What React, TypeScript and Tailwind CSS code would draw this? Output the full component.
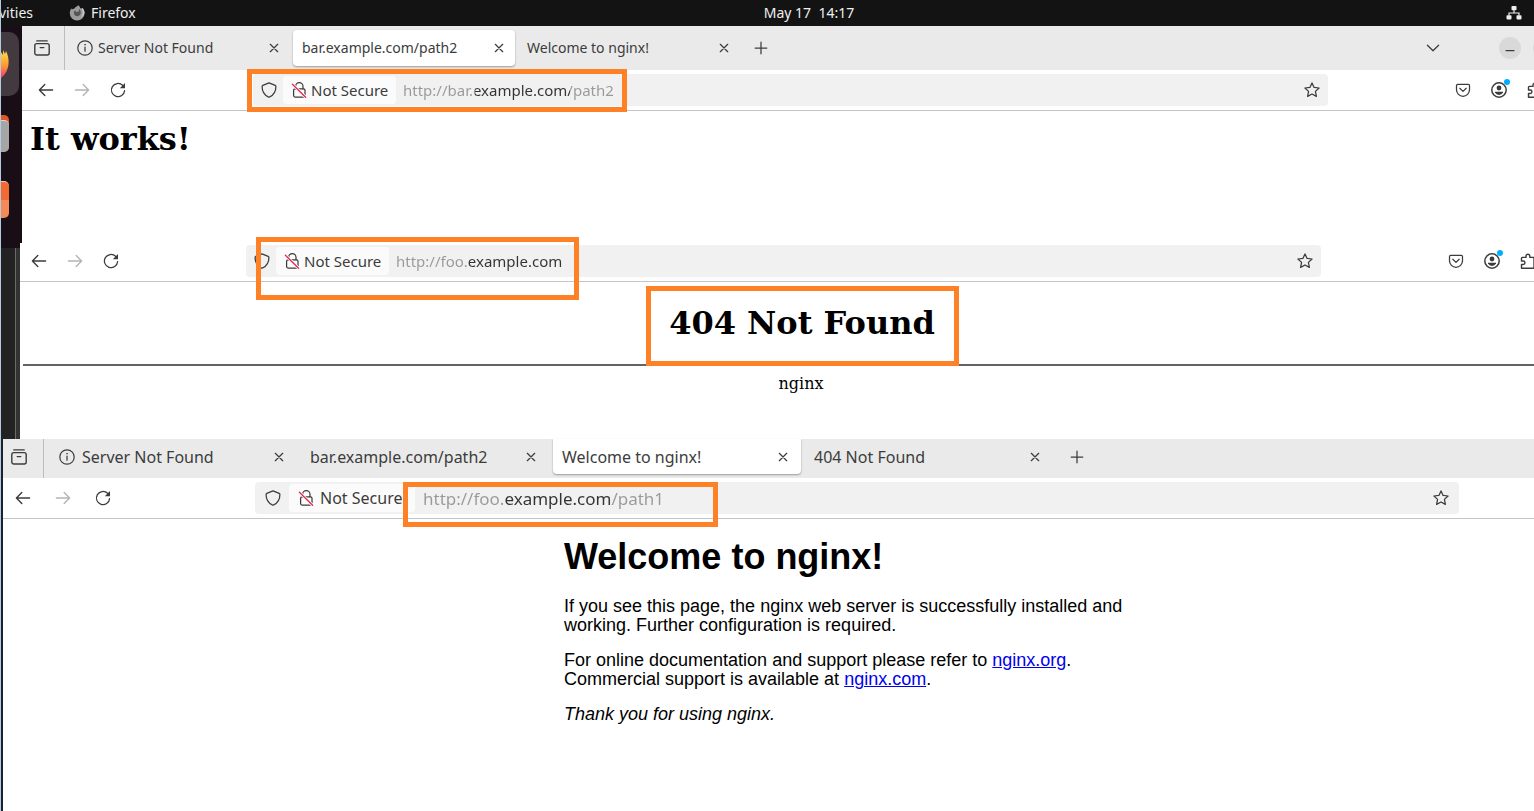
import type { ReactNode } from "react";

type IconProps = { className?: string };

const line = {
  viewBox: "0 0 16 16",
  fill: "none",
  stroke: "currentColor",
  strokeWidth: 1.25,
  strokeLinecap: "round" as const,
  strokeLinejoin: "round" as const,
  "aria-hidden": true,
};

const ArchiveIcon = ({ className }: IconProps) => (
  <svg {...line} strokeWidth="1.4" className={className}>
    <path d="M2.800 .9h10.400" />
    <rect x=".8" y="3.600" width="14.400" height="11.400" rx="2" />
    <path d="M6.200 7.600h3.600" />
  </svg>
);
const InfoIcon = ({ className }: IconProps) => (
  <svg {...line} className={className}>
    <circle cx="8" cy="8" r="7.200" strokeWidth="1.200" />
    <path d="M8 7v4.200" />
    <circle cx="8" cy="4.700" r=".5" fill="currentColor" strokeWidth=".5" />
  </svg>
);
const CloseIcon = ({ className }: IconProps) => (
  <svg {...line} className={className}>
    <path d="M4.300 4.300l7.400 7.400M11.700 4.300l-7.400 7.400" />
  </svg>
);
const PlusIcon = ({ className }: IconProps) => (
  <svg {...line} className={className}>
    <path d="M8 2.200v11.600M2.200 8h11.600" />
  </svg>
);
const ChevronIcon = ({ className }: IconProps) => (
  <svg {...line} className={className}>
    <path d="M2.400 5.200L8 10.800l5.600-5.600" />
  </svg>
);
const BackIcon = ({ className }: IconProps) => (
  <svg {...line} className={className}>
    <path d="M14.600 8H1.600M6.800 2.600L1.400 8l5.400 5.400" strokeWidth="1.400" />
  </svg>
);
const ForwardIcon = ({ className }: IconProps) => (
  <svg {...line} className={className}>
    <path d="M1.400 8h13M9.200 2.600L14.600 8l-5.400 5.400" strokeWidth="1.400" />
  </svg>
);
const ReloadIcon = ({ className }: IconProps) => (
  <svg {...line} className={className}>
    <path d="M14.600 8.600A6.600 6.600 0 1 1 12.600 3.300" />
    <path d="M15 1v5.200H9.800z" fill="currentColor" stroke="none" />
  </svg>
);
const ShieldIcon = ({ className }: IconProps) => (
  <svg {...line} className={className}>
    <path d="M8 .9l6.200 2.500c.5.2.7.6.7 1.100 0 5-2.400 8.600-6.200 10.400-.5.2-.9.2-1.400 0C3.500 13.100 1.100 9.500 1.100 4.500c0-.5.2-.9.7-1.100z" />
  </svg>
);
const LockOffIcon = ({ className }: IconProps) => (
  <svg {...line} className={className}>
    <path d="M4.600 6.800V4.400a3.700 3.700 0 0 1 7.400 0v2.400" />
    <rect x="2.600" y="6.800" width="11.400" height="8.300" rx="1.500" />
    <path d="M1.400 2.200l13.200 13" stroke="#fbfbfb" strokeWidth="3" />
    <path d="M1.400 2.200l13.200 13" stroke="#e22850" strokeWidth="1.300" />
  </svg>
);
const StarIcon = ({ className }: IconProps) => (
  <svg {...line} className={className}>
    <path d="M8 .9l2.100 4.500 5 .6-3.700 3.400 1 5L8 12l-4.400 2.400 1-5L.900 6l5-.6z" />
  </svg>
);
const PocketIcon = ({ className }: IconProps) => (
  <svg {...line} className={className}>
    <path d="M2.700 2.400h10.600c.7 0 1.200.5 1.200 1.200v4.200a6.500 6.500 0 0 1-13 0V3.600c0-.7.5-1.200 1.200-1.200z" />
    <path d="M4.800 6.300L8 9.400l3.200-3.100" />
  </svg>
);
const AccountIcon = ({ className }: IconProps) => (
  <svg {...line} className={className}>
    <circle cx="8" cy="8" r="7.200" strokeWidth="1.500" />
    <circle cx="8" cy="6" r="2.400" fill="currentColor" stroke="none" />
    <path d="M4 9.700h8v.9a4.500 4.500 0 0 1-8 0z" fill="currentColor" stroke="none" />
  </svg>
);
const PuzzleIcon = ({ className }: IconProps) => (
  <svg {...line} strokeWidth="1.400" className={className}>
    <path d="M1.500 15.200v-3.700h1.700a1.700 1.700 0 0 0 0-3.500H1.500V5.200c0-.5.300-.8.800-.8H6V3.100a1.900 1.900 0 0 1 3.800 0v1.300h3.400c.5 0 .8.300.8.800v9.200c0 .5-.3.800-.8.800z" />
  </svg>
);
const NetworkIcon = ({ className }: IconProps) => (
  <svg viewBox="0 0 16 16" fill="currentColor" aria-hidden="true" className={className}>
    <rect x="5.500" y="1" width="5" height="4.200" rx=".8" />
    <rect x=".5" y="10.200" width="5" height="4.200" rx=".8" />
    <rect x="10.500" y="10.200" width="5" height="4.200" rx=".8" />
    <path d="M8 5v3M3 10.500V8h10v2.500" fill="none" stroke="currentColor" strokeWidth="1.200" />
  </svg>
);
const FoxIcon = ({ className }: IconProps) => (
  <svg viewBox="0 0 16 16" aria-hidden="true" className={className}>
    <path d="M9.500.3c1 1 1.600 1.900 1.800 2.900 1-.1 1.500.2 1.900.8l.3-.9c1.200 1.500 2 3.300 2 5.300A7.300 7.300 0 0 1 8.200 15.500 7.300 7.300 0 0 1 .8 8.200C.8 6.200 1.500 4.500 2.500 3.200l.3 1.400c.8-.7 1.600-.9 2.500-.8C6 2.200 7.300 2.200 9.500.3z" fill="#9b9b9b" />
    <path d="M6.300 5.300c-1.700 1-2 3.700-.3 5.100 1.900 1.500 4.900.6 5.600-1.700.6-1.900-.2-3.700-1.600-4.900.4 2.100-.5 3.300-2 3.200-1 0-1.500-.7-1.700-1.700z" fill="#565656" />
    <path d="M12.500 3.900c2 2.700 1.600 6.800-1.200 8.800 2-.4 4-2.400 4.200-4.600.1-2-.7-3.600-2-5z" fill="#c9c9c9" />
  </svg>
);

function IconButton({ label, children, className = "" }: { label: string; children: ReactNode; className?: string }) {
  return (
    <button type="button" aria-label={label} className={`flex shrink-0 items-center justify-center ${className}`}>
      {children}
    </button>
  );
}

type TabData = { title: string; active?: boolean; info?: boolean };

function TabStrip({ tabs, wide = false }: { tabs: TabData[]; wide?: boolean }) {
  const icon = wide ? "h-4 w-[18px]" : "size-4";
  return (
    <header className={`flex bg-[#eaeaea] text-[#3c3c3c] ${wide ? "h-[39px] pb-1 text-base" : "h-11 text-sm"}`}>
      <div className={`flex shrink-0 items-center justify-center border-r border-[#bdbdbd] ${wide ? "-mb-1 w-[41px] pr-2 pb-1" : "w-[43px] pr-[2px]"}`}>
        <IconButton label="Recent browsing">
          <ArchiveIcon className={icon} />
        </IconButton>
      </div>
      <div role="tablist" className={`flex items-center ${wide ? "gap-1 pl-[5px]" : "gap-[3px] pl-[3px]"}`}>
        {tabs.map((tab) => (
          <div
            key={tab.title}
            className={`flex items-center justify-between pl-[9px] ${wide ? "h-[35px] w-[248px] pr-[9px]" : "h-9 w-[222px] pr-2"} ${
              tab.active ? "bg-white shadow-[0_1px_2px_rgba(0,0,0,0.35)] " + (wide ? "rounded-b" : "rounded") : ""
            }`}
          >
            <button type="button" role="tab" aria-selected={!!tab.active} className={`flex items-center whitespace-nowrap ${wide ? "gap-[6px]" : "gap-[5px]"}`}>
              {tab.info && <InfoIcon className={icon} />}
              {tab.title}
            </button>
            <IconButton label={`Close ${tab.title}`}>
              <CloseIcon className={icon} />
            </IconButton>
          </div>
        ))}
      </div>
      <IconButton label="New tab" className={wide ? "w-12" : "w-[42px]"}>
        <PlusIcon className={icon} />
      </IconButton>
      {!wide && (
        <div className="flex min-w-0 flex-1 items-center justify-end overflow-hidden">
          <IconButton label="List all tabs" className="mr-[58px]">
            <ChevronIcon className="size-4" />
          </IconButton>
          <IconButton label="Minimize" className="mr-3 size-[22px] rounded-full bg-[#d9d9d9]">
            <svg {...line} className="size-4">
              <path d="M4 10.500h8" />
            </svg>
          </IconButton>
          <button type="button" aria-label="Maximize" className="-mr-[21px] size-[22px] shrink-0 rounded-full bg-[#d9d9d9]" />
        </div>
      )}
    </header>
  );
}

type ToolbarProps = {
  label: string;
  url: string;
  urlStyle: string;
  wide?: boolean;
  className: string;
  mark: string;
};

function Toolbar({ label, url, urlStyle, wide = false, className, mark }: ToolbarProps) {
  const icon = wide ? "h-4 w-[18px]" : "size-4";
  const cell = wide ? "w-10" : "w-9";
  return (
    <nav className={`flex border-b border-[#c4c4c4] bg-white text-[#3c3c3c] ${className}`}>
      <div className="flex">
        <IconButton label="Back" className={cell}>
          <BackIcon className={icon} />
        </IconButton>
        <IconButton label="Forward" className={`${cell} text-[#b4b4b4]`}>
          <ForwardIcon className={icon} />
        </IconButton>
        <IconButton label="Reload" className={cell}>
          <ReloadIcon className={icon} />
        </IconButton>
      </div>
      <div className={`relative flex h-8 min-w-0 flex-1 items-center rounded bg-[#f1f1f1] ${wide ? "ml-[132px]" : "ml-[117px]"}`}>
        <IconButton label="Tracking protection" className={wide ? "w-[34px] pl-[2px]" : "w-[30px] pl-[2px]"}>
          <ShieldIcon className={icon} />
        </IconButton>
        <button
          type="button"
          className={`flex h-7 shrink-0 items-center rounded bg-[#fbfbfb] pl-2 whitespace-nowrap ${wide ? "w-[126px] gap-[5px] text-base" : "w-[113px] gap-1 text-[15px]"}`}
        >
          <LockOffIcon className={icon} />
          Not Secure
        </button>
        <input
          type="text"
          aria-label={label}
          defaultValue={url}
          spellCheck={false}
          className={`h-7 min-w-0 flex-1 bg-clip-text text-transparent caret-black outline-none ${wide ? "ml-2 text-[17px]" : "ml-[7px] text-[15px]"} ${urlStyle}`}
        />
        <IconButton label="Bookmark this page" className={wide ? "w-9" : "w-8"}>
          <StarIcon className={icon} />
        </IconButton>
        <span aria-hidden="true" className={`pointer-events-none absolute border-5 border-[#ff8127] ${mark}`} />
      </div>
      {wide ? (
        <div className="w-[75px]" />
      ) : (
        <div className="flex shrink-0 pl-[117px]">
          <IconButton label="Save to Pocket" className="w-9">
            <PocketIcon className="size-4" />
          </IconButton>
          <IconButton label="Account" className="w-9">
            <span className="relative">
              <AccountIcon className="size-4" />
              <span className="absolute -top-[3px] -right-[3px] size-[6px] rounded-full bg-[#00aeff]" />
            </span>
          </IconButton>
          <IconButton label="Extensions" className="w-9">
            <PuzzleIcon className="size-4" />
          </IconButton>
        </div>
      )}
    </nav>
  );
}

function Dock() {
  return (
    <aside className="w-[21px] shrink-0 bg-[#190e16] pt-[6px]">
      <div className="flex h-16 w-[18px] items-center rounded-r-[10px] bg-[#433a40]">
        <svg viewBox="0 0 8 30" aria-hidden="true" className="h-[30px] w-2">
          <defs>
            <linearGradient id="flame" x1="0" y1="0" x2="0" y2="1">
              <stop offset="0" stopColor="#ffe14d" />
              <stop offset=".55" stopColor="#ff9a2e" />
              <stop offset="1" stopColor="#f5327a" />
            </linearGradient>
          </defs>
          <path d="M0 3l2 3V1l2 4 1-3c2 4 3 8 2.500 13C7 21 4 26 0 29z" fill="url(#flame)" />
        </svg>
      </div>
      <div className="mt-[19px] h-[37px] w-2 rounded-r-[5px] bg-[#e2562b] pt-[5px]">
        <div className="h-8 rounded-r-[5px] border-t border-[#d8d8d8] bg-[#a5a7a7]" />
      </div>
      <div className="mt-[29px] h-[37px] w-2 rounded-r-[5px] border-t border-[#ffc9ad] bg-linear-to-b from-[#f26a30] from-50% to-[#f58a58] to-50%" />
    </aside>
  );
}

export default function App() {
  return (
    <div className="flex min-h-screen flex-col overflow-hidden border-l border-[#b4cbe4] bg-white font-['Noto_Sans','Open_Sans',sans-serif]">
      <div className="grid h-[26px] grid-cols-[1fr_auto_1fr] items-center bg-[#131313] pb-px text-sm text-[#efefef]">
        <div className="flex items-center">
          <span className="flex w-8 justify-end overflow-hidden whitespace-nowrap">Activities</span>
          <FoxIcon className="ml-9 size-4" />
          <span className="ml-[6px]">Firefox</span>
        </div>
        <time className="pl-[83px] whitespace-pre">May 17  14:17</time>
        <NetworkIcon className="mr-3 size-4 justify-self-end" />
      </div>

      <section className="flex h-[217px]">
        <Dock />
        <div className="min-w-0 flex-1">
          <TabStrip tabs={[{ title: "Server Not Found", info: true }, { title: "bar.example.com/path2", active: true }, { title: "Welcome to nginx!" }]} />
          <Toolbar
            label="Address, path2"
            url="http://bar.example.com/path2"
            urlStyle="bg-[linear-gradient(90deg,#999_72px,#333_72px,#333_167px,#999_167px)]"
            className="-mr-[19px] h-[41px] py-1 pl-[6px]"
            mark="-left-[6px] -top-[5px] h-[43px] w-[380px]"
          />
          <h1 className="px-2 pt-[9px] font-['DejaVu_Serif',serif] text-[32px] leading-[38px] font-bold text-black">It works!</h1>
        </div>
      </section>

      <section className="flex h-[196px]">
        <div className="flex w-[19px] shrink-0 border-t-[5px] border-[#190e16] bg-[#222222]">
          <div className="ml-auto w-[5px] border-l border-l-[#6b6b6b] bg-[#333333]" />
        </div>
        <div className="min-w-0 flex-1">
          <Toolbar
            label="Address, foo"
            url="http://foo.example.com"
            urlStyle="bg-[linear-gradient(90deg,#999_72px,#333_72px)]"
            className="-mr-3 h-[39px] pt-[2px] pb-1 pl-px"
            mark="left-[10px] -top-2 h-[63px] w-[323px]"
          />
          <div className="pl-[3px] font-['DejaVu_Serif',serif] text-black">
            <div className="flex justify-center pt-1 pl-[47px]">
              <h1 className="flex h-20 w-[313px] items-center justify-center border-5 border-[#ff8127] pb-[6px] text-[32px] leading-[38px] font-bold">
                404 Not Found
              </h1>
            </div>
            <hr className="-mt-[2px] border-t-2 border-[#636363]" />
            <p className="pt-2 pl-[45px] text-center text-base leading-5">nginx</p>
          </div>
        </div>
      </section>

      <section className="flex flex-1">
        <div className="w-[2px] shrink-0 bg-[#1c2229]" />
        <div className="min-w-0 flex-1">
          <TabStrip
            wide
            tabs={[{ title: "Server Not Found", info: true }, { title: "bar.example.com/path2" }, { title: "Welcome to nginx!", active: true }, { title: "404 Not Found" }]}
          />
          <Toolbar
            label="Address, path1"
            wide
            url="http://foo.example.com/path1"
            urlStyle="bg-[linear-gradient(90deg,#999_81px,#333_81px,#333_189px,#999_189px)]"
            className="h-[41px] py-1"
            mark="left-[148px] top-0 h-[45px] w-[315px]"
          />
          <div className="pl-[219px]">
            <main className="mx-auto max-w-[628px] pt-[18px] font-['Liberation_Sans',Arial,sans-serif] text-lg/[19px] text-black">
              <h1 className="text-4xl leading-10 font-bold">Welcome to nginx!</h1>
              <p className="mt-5">
                If you see this page, the nginx web server is successfully installed and
                <br />
                working. Further configuration is required.
              </p>
              <p className="mt-4">
                For online documentation and support please refer to{" "}
                <a href="#nginx-org" className="text-[#0000ee] underline">nginx.org</a>.
                <br />
                Commercial support is available at{" "}
                <a href="#nginx-com" className="text-[#0000ee] underline">nginx.com</a>.
              </p>
              <p className="mt-4 italic">Thank you for using nginx.</p>
            </main>
          </div>
        </div>
      </section>
    </div>
  );
}
